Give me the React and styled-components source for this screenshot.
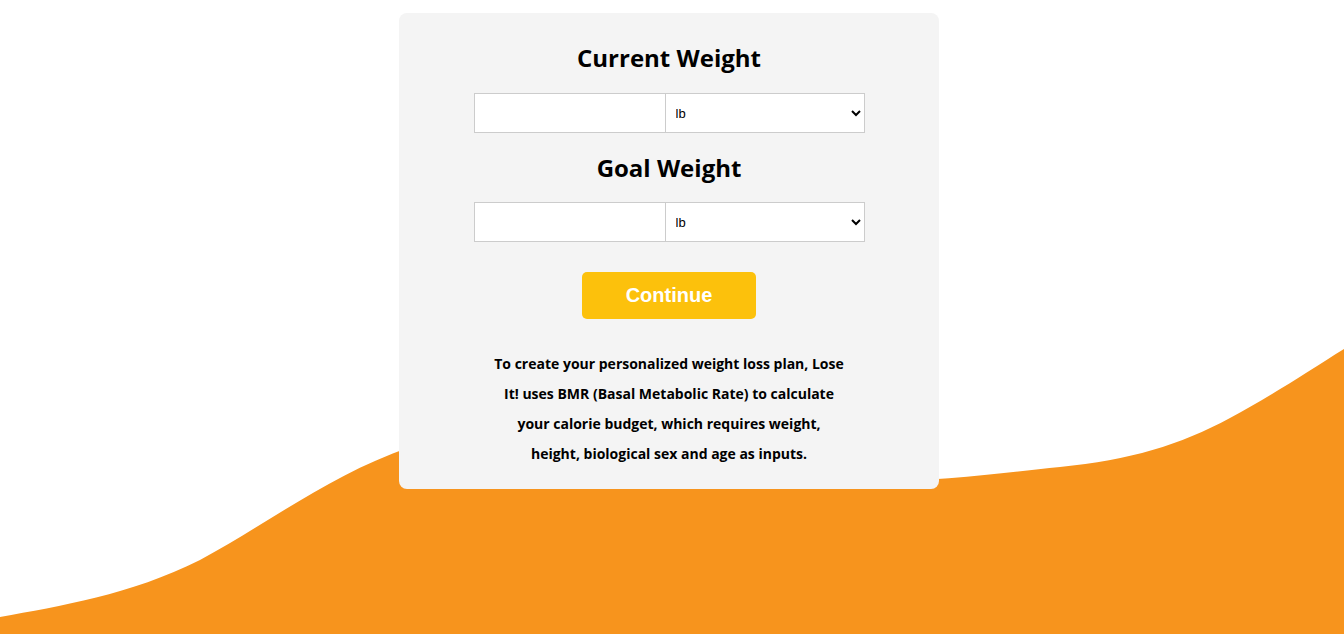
import React from "react";
import styled, { createGlobalStyle } from "styled-components";

const Global = createGlobalStyle`
  html, body { margin: 0; padding: 0; background: #fff; }
  body { font-family: "Open Sans", "Liberation Sans", sans-serif; }
  * { box-sizing: border-box; }
`;

const Page = styled.div`
  position: relative;
  min-height: 634px;
  overflow: hidden;
  display: flex;
  justify-content: center;
  align-items: flex-start;
  padding: 13px 6px 0 0;
`;

const Wave = styled.svg`
  position: absolute;
  left: 0;
  top: 0;
  width: 1344px;
  height: 634px;
  z-index: 0;
`;

const Card = styled.div`
  position: relative;
  z-index: 1;
  width: 540px;
  background: #f4f4f4;
  border-radius: 8px;
  padding: 29px 0 20px;
  display: flex;
  flex-direction: column;
  align-items: center;
`;

const Title = styled.h2`
  margin: ${(p) => p.$mt || 0}px 0 ${(p) => p.$mb || 19}px;
  font-family: "Open Sans", sans-serif;
  font-weight: 700;
  font-size: 24px;
  line-height: 32px;
  color: #000;
`;

const Row = styled.div`
  display: flex;
  width: 391px;
  height: 40px;
`;

const NumberInput = styled.input`
  width: 191px;
  height: 40px;
  border: 1px solid #ccc;
  border-right: none;
  background: #fff;
  padding: 0 10px;
  font-family: "Liberation Sans", Arial, sans-serif;
  font-size: 13px;
  outline: none;
  margin: 0;
`;

const UnitSelect = styled.select`
  width: 200px;
  height: 40px;
  border: 1px solid #ccc;
  border-radius: 0;
  background: #fff;
  padding: 0 6px;
  font-family: "Liberation Sans", Arial, sans-serif;
  font-size: 13px;
  color: #000;
  margin: 0;
  outline: none;
`;

const Button = styled.button`
  margin-top: 30px;
  width: 174px;
  height: 47px;
  border: none;
  border-radius: 5px;
  background: #fcc10c;
  color: #fff;
  font-family: "Liberation Sans", Arial, sans-serif;
  font-weight: 700;
  font-size: 20px;
  cursor: pointer;
`;

const Note = styled.p`
  margin: 30px 0 0;
  width: 352px;
  text-align: center;
  font-family: "Open Sans", sans-serif;
  font-weight: 700;
  font-size: 14px;
  line-height: 30px;
  color: #000;
`;

function WeightField() {
  return (
    <Row>
      <NumberInput type="number" />
      <UnitSelect defaultValue="lb">
        <option value="lb">lb</option>
        <option value="kg">kg</option>
      </UnitSelect>
    </Row>
  );
}

export default function App() {
  return (
    <>
      <Global />
      <Page>
        <Wave viewBox="0 0 1344 634" preserveAspectRatio="none">
          <path
            fill="#f7941d"
            d="M0 617 C 60 606, 130 595, 200 560 C 270 522, 330 475, 410 447 C 520 412, 650 460, 800 478 C 900 488, 990 474, 1060 467 C 1130 460, 1180 445, 1230 418 C 1270 397, 1310 370, 1344 349 L 1344 634 L 0 634 Z"
          />
        </Wave>
        <Card>
          <Title>Current Weight</Title>
          <WeightField />
          <Title $mt={19} $mb={18}>Goal Weight</Title>
          <WeightField />
          <Button>Continue</Button>
          <Note>
            To create your personalized weight loss plan, Lose It! uses BMR (Basal Metabolic Rate) to calculate your calorie budget, which requires weight, height, biological sex and age as inputs.
          </Note>
        </Card>
      </Page>
    </>
  );
}
